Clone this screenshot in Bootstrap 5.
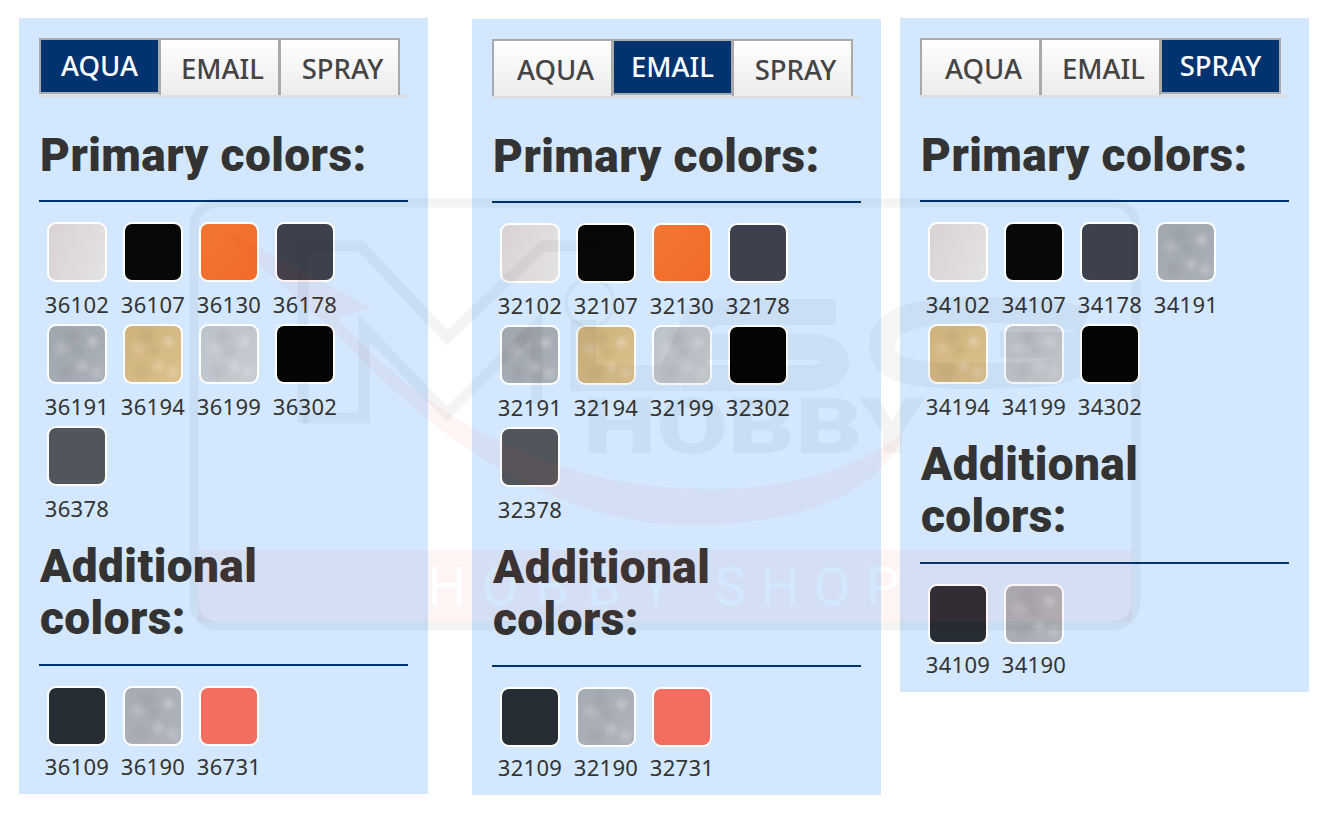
<!DOCTYPE html>
<html lang="en"><head><meta charset="utf-8"><title>Colors</title>
<link href="https://cdn.jsdelivr.net/npm/bootstrap@5.3.0/dist/css/bootstrap.min.css" rel="stylesheet">
<style>
:root{--speck:radial-gradient(circle at 78% 28%,rgba(255,255,255,.28),transparent 14%),radial-gradient(circle at 60% 72%,rgba(255,255,255,.22),transparent 16%),radial-gradient(circle at 22% 40%,rgba(255,255,255,.16),transparent 18%),radial-gradient(circle at 40% 20%,rgba(0,0,0,.06),transparent 22%),radial-gradient(circle at 85% 82%,rgba(255,255,255,.2),transparent 14%),radial-gradient(circle at 30% 82%,rgba(0,0,0,.05),transparent 20%),radial-gradient(circle at 52% 45%,rgba(0,0,0,.05),transparent 20%)}
body{background:#fff;color:#333;font-family:"Noto Sans",sans-serif;overflow:hidden}
.sheet{padding:18px 0 0 19px;position:relative;height:829px}
.pane{width:409px;background:#d3e8fe;padding:20px 20px 6px}
.pane-mid{margin:1px 19px 0 44px}
.tabbar{border-bottom:2px solid #ddd;height:59px}
.tabbtn{width:121px;height:57px;margin-right:-1px;border:2px solid #aaa;border-bottom:0;background:linear-gradient(#fff,#ececec);color:#444;font-size:27.5px;font-weight:500;line-height:58px;text-align:center;padding-left:6px}
.tabbtn.on{background:#00336f;color:#fff;height:56px;line-height:52px;border-bottom:2px solid #aaa;padding-left:0;position:relative}
.headline{font-family:Roboto,sans-serif;font-weight:900;font-size:46px;line-height:52px;letter-spacing:.42px;color:#333;padding:0 0 19px 1px;border-bottom:2px solid #00336f;margin:32px 0 20px}
.headline-next{margin-top:12px;padding-bottom:20px}
.tile{width:76px;height:102px;text-align:center;font-size:22px;letter-spacing:.3px;line-height:30px;color:#333}
.chip{display:block;width:60px;height:60px;margin:0 auto 7px;border:2px solid #fff;border-radius:9px}
.extras .chip{margin-bottom:5px}
.wm{position:absolute;left:0;top:0;width:1330px;height:829px;pointer-events:none}
.c1{background:linear-gradient(110deg,#dad2d2,#e4e2e2)}
.c2{background:#080808}
.c3{background:linear-gradient(135deg,#f37632,#f26a28)}
.c4{background:#3d414d}
.c5{background-image:var(--speck),linear-gradient(135deg,#a0a7af,#aab0b8)}
.c6{background-image:var(--speck),linear-gradient(135deg,#cfb27e,#dcc08c)}
.c7{background-image:var(--speck),linear-gradient(135deg,#bcc3ca,#c6cbd1)}
.c8{background:#050505}
.c9{background:#50565c}
.c10{background:#272d34}
.c11{background-image:var(--speck),linear-gradient(135deg,#a6acb4,#aeb3ba)}
.c12{background:#f26e60}
</style></head><body>
<div class="sheet d-flex align-items-start">
<section class="pane">
<div class="tabbar d-flex align-items-start"><div class="tabbtn on">AQUA</div><div class="tabbtn">EMAIL</div><div class="tabbtn">SPRAY</div></div>
<h2 class="headline">Primary colors:</h2>
<div class="d-flex flex-wrap">
<div class="tile"><span class="chip c1"></span>36102</div><div class="tile"><span class="chip c2"></span>36107</div><div class="tile"><span class="chip c3"></span>36130</div><div class="tile"><span class="chip c4"></span>36178</div>
<div class="tile"><span class="chip c5"></span>36191</div><div class="tile"><span class="chip c6"></span>36194</div><div class="tile"><span class="chip c7"></span>36199</div><div class="tile"><span class="chip c8"></span>36302</div>
<div class="tile"><span class="chip c9"></span>36378</div>
</div>
<h2 class="headline headline-next">Additional colors:</h2>
<div class="d-flex flex-wrap extras">
<div class="tile"><span class="chip c10"></span>36109</div><div class="tile"><span class="chip c11"></span>36190</div><div class="tile"><span class="chip c12"></span>36731</div>
</div>
</section>
<section class="pane pane-mid">
<div class="tabbar d-flex align-items-start"><div class="tabbtn">AQUA</div><div class="tabbtn on">EMAIL</div><div class="tabbtn">SPRAY</div></div>
<h2 class="headline">Primary colors:</h2>
<div class="d-flex flex-wrap">
<div class="tile"><span class="chip c1"></span>32102</div><div class="tile"><span class="chip c2"></span>32107</div><div class="tile"><span class="chip c3"></span>32130</div><div class="tile"><span class="chip c4"></span>32178</div>
<div class="tile"><span class="chip c5"></span>32191</div><div class="tile"><span class="chip c6"></span>32194</div><div class="tile"><span class="chip c7"></span>32199</div><div class="tile"><span class="chip c8"></span>32302</div>
<div class="tile"><span class="chip c9"></span>32378</div>
</div>
<h2 class="headline headline-next">Additional colors:</h2>
<div class="d-flex flex-wrap extras">
<div class="tile"><span class="chip c10"></span>32109</div><div class="tile"><span class="chip c11"></span>32190</div><div class="tile"><span class="chip c12"></span>32731</div>
</div>
</section>
<section class="pane">
<div class="tabbar d-flex align-items-start"><div class="tabbtn">AQUA</div><div class="tabbtn">EMAIL</div><div class="tabbtn on">SPRAY</div></div>
<h2 class="headline">Primary colors:</h2>
<div class="d-flex flex-wrap">
<div class="tile"><span class="chip c1"></span>34102</div><div class="tile"><span class="chip c2"></span>34107</div><div class="tile"><span class="chip c4"></span>34178</div><div class="tile"><span class="chip c5"></span>34191</div>
<div class="tile"><span class="chip c6"></span>34194</div><div class="tile"><span class="chip c7"></span>34199</div><div class="tile"><span class="chip c8"></span>34302</div>
</div>
<h2 class="headline headline-next">Additional colors:</h2>
<div class="d-flex flex-wrap extras">
<div class="tile"><span class="chip c10"></span>34109</div><div class="tile"><span class="chip c11"></span>34190</div>
</div>
</section>
<svg class="wm" viewBox="0 0 1330 829" aria-hidden="true">
<defs><mask id="hole"><rect x="190" y="540" width="950" height="90" fill="#fff"/>
<text y="605" font-family="Roboto,sans-serif" font-size="54" text-anchor="middle" x="447 500 552 604 656">HOBBY</text>
<text y="605" font-family="Roboto,sans-serif" font-size="54" text-anchor="middle" x="730 780 832 883">SHOP</text></mask></defs>
<rect x="194" y="203" width="942" height="423" rx="24" fill="none" stroke="#000" stroke-opacity=".045" stroke-width="9"/>
<path d="M303 423V246h58l86 92 96-92h62" fill="none" stroke="#000" stroke-opacity=".045" stroke-width="11"/>
<path d="M303 418h61V328l83 86 90-90v80" fill="none" stroke="#000" stroke-opacity=".045" stroke-width="11"/>
<circle cx="590" cy="303" r="24" fill="none" stroke="#000" stroke-opacity=".04" stroke-width="4"/>
<path d="M583 320V378H670L700 310M836 312H722C695 312 692 340 694 378H810C845 378 845 347 810 347H700" fill="none" stroke="#000" stroke-opacity=".04" stroke-width="26"/>
<path d="M1085 322C1060 310 1020 310 970 310 905 310 882 325 882 345 882 370 910 376 970 376 1020 376 1060 376 1080 362V345H1000" fill="none" stroke="#000" stroke-opacity=".04" stroke-width="26"/>
<path d="M215 225 372 308 338 318C400 390 520 480 680 488 780 494 860 470 905 430 880 500 790 525 690 525 560 525 440 445 338 335Z" fill="#f44" fill-opacity=".05"/>
<rect x="198" y="550" width="934" height="72" fill="#f44" fill-opacity=".05" mask="url(#hole)"/>
<text x="583" y="453" textLength="342" lengthAdjust="spacingAndGlyphs" font-family="Roboto,sans-serif" font-weight="900" font-size="78" fill="#000" fill-opacity=".045">HOBBY</text>
</svg>
</div>
</body></html>
